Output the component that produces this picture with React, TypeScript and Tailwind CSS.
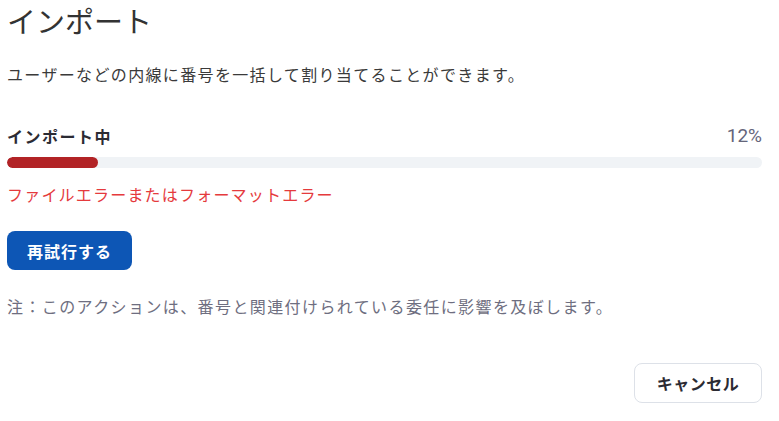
import React from 'react';

const progress = 12;

export default function App() {
  return (
    <div className="min-h-[421px] w-[779px] bg-white font-['Noto_Sans_CJK_JP',sans-serif] text-[#333]">
      <div className="flex w-[762px] flex-col pl-[7px]">
        <h1 className="h-[40px] text-[29px] leading-[40px] font-normal text-[#333]">インポート</h1>

        <p className="mt-[22px] text-[16px] leading-[24px] tracking-[1.35px] text-[#3a3a3a]">
          ユーザーなどの内線に番号を一括して割り当てることができます。
        </p>

        <div className="mt-[38px] flex items-center justify-between">
          <span className="text-[16px] leading-[24px] font-bold tracking-[1.5px] text-[#2b2b33]">インポート中</span>
          <span className="font-['Roboto',sans-serif] text-[19px] leading-[24px] text-[#65657a]">{progress}%</span>
        </div>

        <div className="mt-[9px] h-[11px] w-full overflow-hidden rounded-full bg-[#f0f3f6]">
          <div className="h-full rounded-full bg-[#b22326]" style={{ width: `${progress}%` }} />
        </div>

        <p className="mt-[14px] text-[16px] leading-[24px] tracking-[1.2px] text-[#e53a3d]">
          ファイルエラーまたはフォーマットエラー
        </p>

        <div className="mt-[25px]">
          <button className="h-[39px] w-[125px] rounded-[8px] bg-[#0d56b5] text-[16px] font-bold tracking-[1px] text-white">
            再試行する
          </button>
        </div>

        <p className="mt-[24px] text-[16px] leading-[24px] tracking-[1.4px] text-[#6e6e80]">
          注：このアクションは、番号と関連付けられている委任に影響を及ぼします。
        </p>

        <div className="mt-[45px] flex justify-end">
          <button className="h-[40px] w-[128px] rounded-[8px] border border-[#dde1e8] bg-white text-[16px] font-bold tracking-[0.5px] text-[#2b2b33]">
            キャンセル
          </button>
        </div>
      </div>
    </div>
  );
}
